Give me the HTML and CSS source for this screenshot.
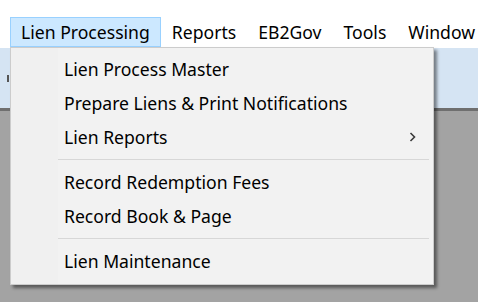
FILE: index.html
```html
<!DOCTYPE html>
<html lang="en">
<head>
    <meta charset="UTF-8">
    <title>Lien Processing</title>
    <link rel="stylesheet" href="styles.css">
</head>
<body>
    <div class="window">
        <div class="menubar">
            <div class="menu-item active">Lien Processing</div>
            <div class="menu-item">Reports</div>
            <div class="menu-item">EB2Gov</div>
            <div class="menu-item">Tools</div>
            <div class="menu-item">Window</div>
        </div>
        <div class="toolbar">
            <span class="grip"></span>
        </div>
        <div class="workspace"></div>

        <!-- dropdown for Lien Processing -->
        <div class="dropdown">
            <div class="row">Lien Process Master</div>
            <div class="row">Prepare Liens &amp; Print Notifications</div>
            <div class="row has-sub">
                <span>Lien Reports</span>
                <svg class="chevron" width="7" height="10" viewBox="0 0 7 10">
                    <polyline points="1.5,1 5.5,5 1.5,9" fill="none" stroke="#3a3a3a" stroke-width="1.6"/>
                </svg>
            </div>
            <div class="sep"></div>
            <div class="row">Record Redemption Fees</div>
            <div class="row">Record Book &amp; Page</div>
            <div class="sep"></div>
            <div class="row">Lien Maintenance</div>
        </div>
    </div>
</body>
</html>
```

FILE: styles.css
```css
body {
    margin: 0;
    font-family: 'Noto Sans', 'Open Sans', sans-serif;
    font-size: 17.6px;
    color: #000;
    background-color: #fff;
}

.window {
    position: relative;
    width: 478px;
    height: 302px;
    overflow: hidden;
    display: flex;
    flex-direction: column;
}

.menubar {
    display: flex;
    height: 30px;
    padding-top: 17px;
    padding-left: 10px;
    background-color: #fff;
}

.menu-item {
    padding: 0 10px;
    line-height: 28px;
    border: 1px solid transparent;
    white-space: nowrap;
}

.menu-item.active {
    background-color: #cce8ff;
    border-color: #99d1ff;
}

.toolbar {
    height: 60px;
    margin-top: 1px;
    background-color: #d5e4f3;
    border-bottom: 3px solid #6f6f6f;
    display: flex;
    align-items: center;
}

.grip {
    width: 2px;
    height: 7px;
    margin-left: 7px;
    background-color: #555;
}

.workspace {
    flex: 1;
    background-color: #a3a3a3;
}

/* popup menu, sits over the toolbar */
.dropdown {
    position: absolute;
    left: 10px;
    top: 47px;
    width: 422px;
    padding: 4px 0 6px 0;
    background-color: #f2f2f2;
    background-image: linear-gradient(to right, #f0f0f0 47px, #f2f2f2 47px);
    border: 1px solid #cccccc;
    box-shadow: 3px 3px 3px rgba(0, 0, 0, 0.45);
}

.row {
    display: flex;
    align-items: center;
    justify-content: space-between;
    height: 34px;
    line-height: 34px;
    padding-left: 53px;
    padding-right: 17px;
    white-space: nowrap;
}

.sep {
    height: 1px;
    margin: 5px 4px 5px 47px;
    background-color: #d7d7d7;
}
```
